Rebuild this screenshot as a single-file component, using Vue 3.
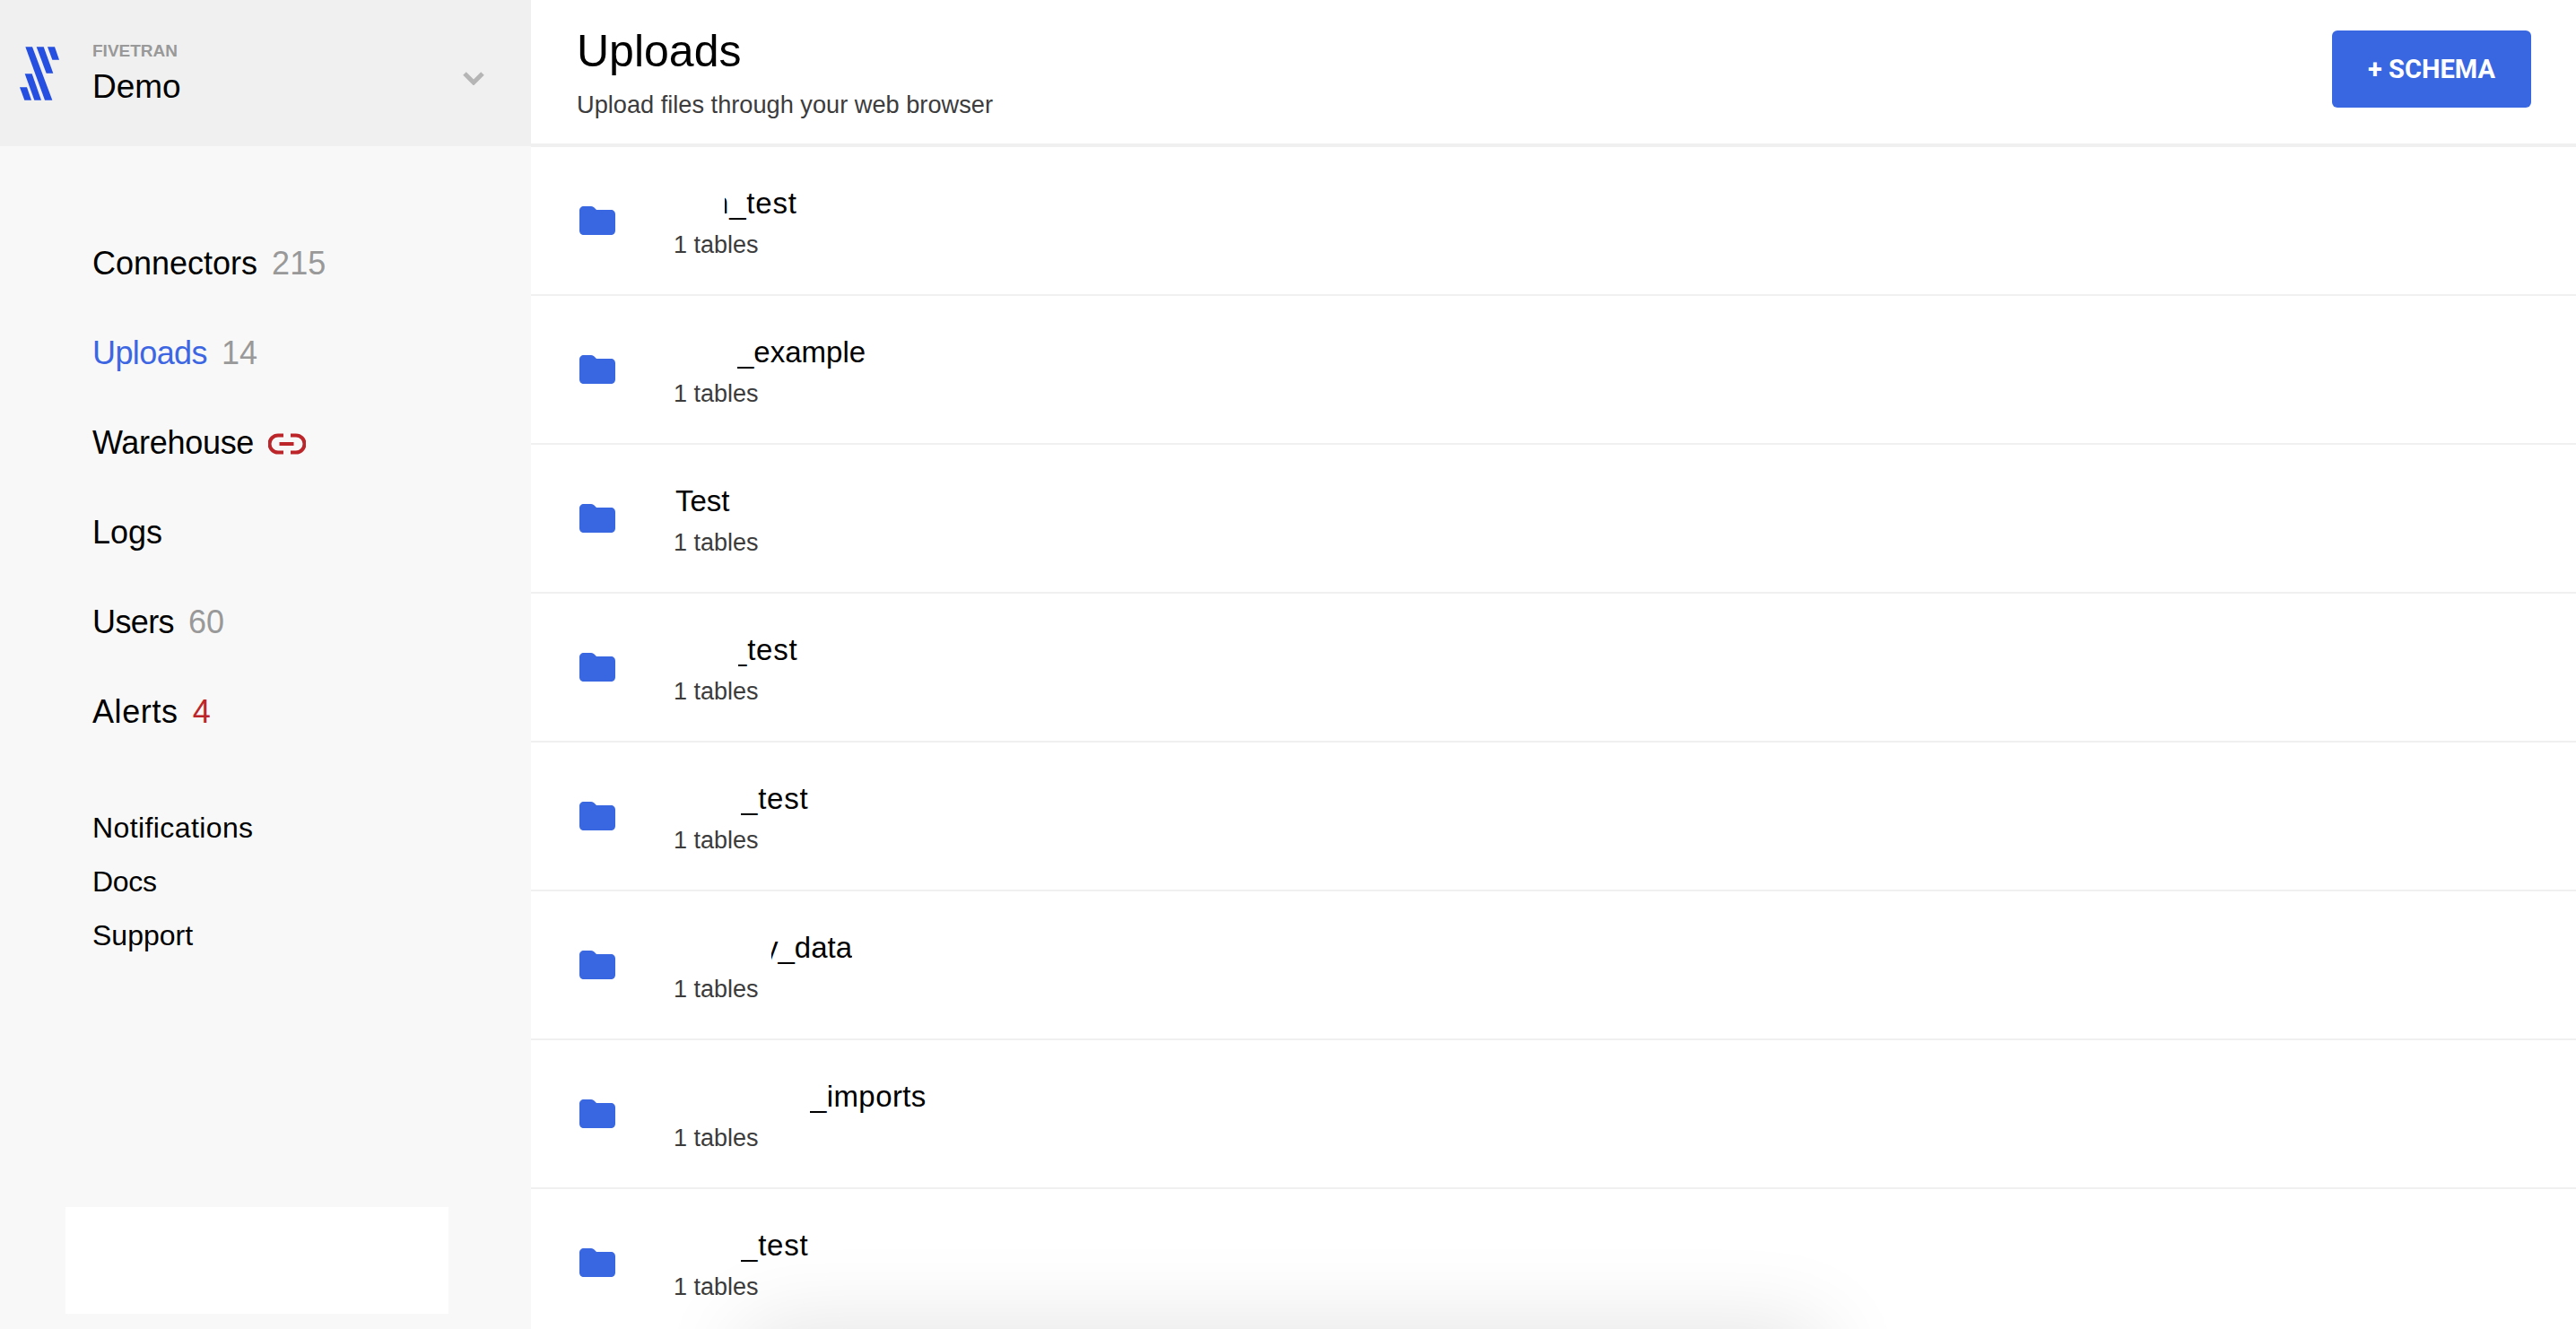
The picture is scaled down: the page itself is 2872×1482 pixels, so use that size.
<template>
  <div class="page">
    <aside class="sidebar">
      <div class="account">
        <svg class="logo" viewBox="66 66 132 179">
          <path d="M85 66H108L175 245H150Z" />
          <path d="M122 66H146L178 155H155Z" />
          <path d="M159 66H183L198 110H175Z" />
          <path d="M83 156H107L138 245H115Z" />
          <path d="M66 201H90L105 245H82Z" />
        </svg>
        <div class="account-text">
          <div class="brand">FIVETRAN</div>
          <div class="account-name">Demo</div>
        </div>
        <svg class="chevron" viewBox="0 0 24 15">
          <path d="M2 2L12 12L22 2" />
        </svg>
      </div>

      <nav class="nav">
        <a v-for="item in navItems" :key="item.label" class="nav-item" :class="{ active: item.active }">
          <span :style="{ letterSpacing: (item.spacing || 0) + 'px' }">{{ item.label }}</span>
          <span v-if="item.count" class="count" :class="{ alert: item.alert }">{{ item.count }}</span>
          <svg v-if="item.broken" class="broken" viewBox="0 0 42 24">
            <path d="M17 2.500H11A9.500 9.500 0 0 0 11 21.500H17" />
            <path d="M25 2.500H31A9.500 9.500 0 0 1 31 21.500H25" />
            <path d="M12.500 12H28.500" />
          </svg>
        </a>
      </nav>

      <div class="links">
        <a v-for="link in links" :key="link.label" :style="{ letterSpacing: link.spacing + 'px' }">{{ link.label }}</a>
      </div>

      <div class="blank"></div>
    </aside>

    <main class="main">
      <header class="header">
        <div>
          <h1>Uploads</h1>
          <p>Upload files through your web browser</p>
        </div>
        <button class="add">+ SCHEMA</button>
      </header>

      <div class="row" v-for="row in rows" :key="row.name + row.left">
        <svg class="folder" viewBox="0 0 40 32">
          <path d="M5 0H13C15 0 16 1 17 2L19 4H35C38 4 40 6 40 9V27C40 30 38 32 35 32H5C2 32 0 30 0 27V5C0 2 2 0 5 0Z" />
        </svg>
        <div class="row-text">
          <div
            class="name"
            :style="{
              marginLeft: row.left + 'px',
              letterSpacing: row.spacing + 'px',
              clipPath: `inset(0 0 0 ${row.clip}px)`,
            }"
          >{{ row.name }}</div>
          <div class="tables">1 tables</div>
        </div>
      </div>
    </main>

    <div class="shadow"></div>
  </div>
</template>

<script setup>
const navItems = [
  { label: 'Connectors', count: '215' },
  { label: 'Uploads', count: '14', active: true, spacing: -0.6 },
  { label: 'Warehouse', broken: true, spacing: -0.3 },
  { label: 'Logs' },
  { label: 'Users', count: '60', spacing: -0.6 },
  { label: 'Alerts', count: '4', alert: true, spacing: 0.6 },
]

const links = [
  { label: 'Notifications', spacing: 0.4 },
  { label: 'Docs', spacing: -0.3 },
  { label: 'Support', spacing: 0 },
]

// left part of most names is blanked out in the screenshot
const rows = [
  { name: 'n_test', left: 43, clip: 14, spacing: 0.8 },
  { name: '_example', left: 71, clip: 0, spacing: 0 },
  { name: 'Test', left: 2, clip: 0, spacing: 0 },
  { name: '_test', left: 63, clip: 9, spacing: 0.8 },
  { name: '_test', left: 75, clip: 0, spacing: 0.8 },
  { name: 'y_data', left: 100, clip: 9, spacing: 0 },
  { name: '_imports', left: 152, clip: 0, spacing: 0.4 },
  { name: '_test', left: 75, clip: 0, spacing: 0.8 },
]
</script>

<style>
html, body {
  margin: 0;
  height: 100%;
  overflow: hidden;
  background: #fff;
}
</style>

<style scoped>
.page {
  display: flex;
  height: 1482px;
  overflow: hidden;
  font-family: "Liberation Sans", Arial, sans-serif;
  color: #000;
}

.sidebar {
  width: 592px;
  flex: none;
  background: #f8f8f8;
  display: flex;
  flex-direction: column;
}

.account {
  height: 163px;
  box-sizing: border-box;
  background: #f0f0f0;
  display: flex;
  align-items: center;
  padding-left: 22px;
}

.logo {
  width: 44px;
  height: 60px;
  fill: #254fe0;
  flex: none;
}

.account-text {
  margin: 4px 0 0 37px;
}

.brand {
  font-size: 19px;
  font-weight: 700;
  line-height: 24px;
  color: #999;
}

.account-name {
  font-size: 37px;
  line-height: 50px;
  margin-top: 3px;
}

.chevron {
  width: 24px;
  height: 15px;
  margin-left: auto;
  margin-right: 52px;
  margin-top: 11px;
  fill: none;
  stroke: #b5b5b5;
  stroke-width: 5;
}

.nav {
  padding: 81px 0 0 103px;
  display: flex;
  flex-direction: column;
}

.nav-item {
  height: 100px;
  display: flex;
  align-items: center;
  gap: 16px;
  font-size: 36px;
}

.nav-item.active {
  color: #3d66e3;
}

.count {
  color: #999;
}

.count.alert {
  color: #bc2529;
}

.broken {
  width: 42px;
  height: 24px;
  fill: none;
  stroke: #bc2529;
  stroke-width: 4;
  margin-top: 2px;
}

.links {
  padding: 49px 0 0 103px;
  display: flex;
  flex-direction: column;
}

.links a {
  height: 60px;
  display: flex;
  align-items: center;
  font-size: 32px;
}

.blank {
  margin: auto 92px 17px 73px;
  height: 119px;
  background: #fff;
}

.main {
  flex: 1;
  min-width: 0;
}

.header {
  height: 164px;
  box-sizing: border-box;
  border-bottom: 4px solid #f0f0f0;
  padding: 0 50px 0 51px;
  display: flex;
  justify-content: space-between;
  align-items: flex-start;
}

h1 {
  margin: 24px 0 0;
  font-size: 50px;
  line-height: 66px;
  font-weight: 400;
}

.header p {
  margin: 9px 0 0;
  font-size: 27.2px;
  line-height: 36px;
  color: #3c3c3c;
}

.add {
  margin-top: 34px;
  width: 222px;
  height: 86px;
  border: 0;
  padding: 0;
  border-radius: 6px;
  background: #3967e2;
  color: #fff;
  font-family: Roboto, "Liberation Sans", sans-serif;
  font-size: 29px;
  font-weight: 700;
}

.row {
  height: 166px;
  box-sizing: border-box;
  border-bottom: 2px solid #f0f0f0;
  padding-left: 54px;
  display: flex;
  align-items: center;
}

.folder {
  width: 40px;
  height: 32px;
  fill: #3967e2;
  flex: none;
}

.row-text {
  margin: 8px 0 0 65px;
}

.name {
  font-size: 33px;
  line-height: 46px;
}

.tables {
  font-size: 27px;
  line-height: 46px;
  color: #3c3c3c;
}

.shadow {
  position: fixed;
  left: 830px;
  top: 1482px;
  width: 1200px;
  height: 100px;
  box-shadow: 0 0 100px rgba(0, 0, 0, 0.12);
}
</style>
